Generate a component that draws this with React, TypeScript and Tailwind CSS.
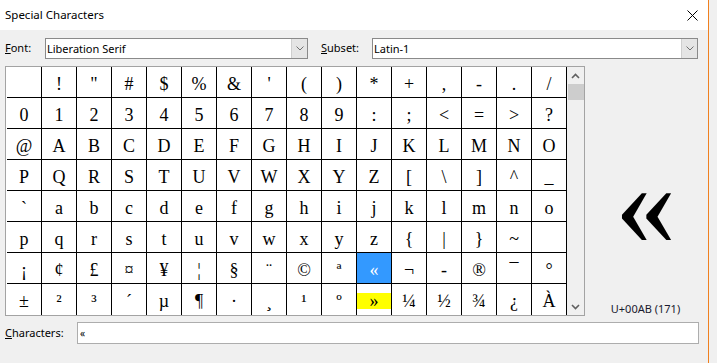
import React from "react";

const ROWS = [
  " !\"#$%&'()*+,-./",
  "0123456789:;<=>?",
  "@ABCDEFGHIJKLMNO",
  "PQRSTUVWXYZ[\\]^_",
  "`abcdefghijklmno",
  "pqrstuvwxyz{|}~ ",
  "¡¢£¤¥¦§¨©ª«¬-®¯°",
  "±²³´µ¶·¸¹º»¼½¾¿À",
];

const ui = "font-['Segoe_UI','Noto_Sans',sans-serif]";

function Chevron({ up = false }: { up?: boolean }) {
  return (
    <svg width="9" height="6" viewBox="0 0 9 6">
      <polyline
        points={up ? "1,5 4.5,1.5 8,5" : "1,1 4.5,4.5 8,1"}
        fill="none"
        stroke="currentColor"
        strokeWidth="1.6"
      />
    </svg>
  );
}

function Combo({ value, width }: { value: string; width: string }) {
  return (
    <div className={`${width} h-[21px] flex bg-white border border-[#8a8a8a]`}>
      <div className="flex-1 pl-px text-[11px] leading-[19px] text-black">{value}</div>
      <div className="w-[16px] h-[19px] bg-[#e5e5e5] border-l border-[#cfcfcf] flex items-center justify-center text-[#707070]">
        <svg width="8" height="5" viewBox="0 0 8 5">
          <polyline points="0.5,0.5 4,4 7.5,0.5" fill="none" stroke="currentColor" strokeWidth="1" />
        </svg>
      </div>
    </div>
  );
}

function Cell({ ch, row, col }: { ch: string; row: number; col: number }) {
  const sel = row === 6 && col === 10;
  const mark = row === 7 && col === 10;
  const edge = row < 7 ? "border-r border-b" : "border-r";
  if (mark) {
    return (
      <div className={`h-[31px] ${edge} border-black pt-[9px]`}>
        <div className="h-[16px] bg-[#ffff00] flex items-center justify-center text-[18px] leading-none text-black">
          {ch}
        </div>
      </div>
    );
  }
  return (
    <div
      className={`h-[31px] ${edge} border-black flex items-center justify-center pt-[3px] text-[18px] leading-none ${
        sel ? "bg-[#3399ff] text-white" : "text-black"
      }`}
    >
      {ch}
    </div>
  );
}

export default function App() {
  return (
    <div className={`w-[717px] h-[363px] flex bg-[#f0f0f0] overflow-hidden ${ui}`}>
      <div className="w-[708px] flex flex-col">
        <div className="h-[30px] bg-white flex items-center justify-between pl-[5px] pr-[10px]">
          <span className="text-[11.5px] text-black">Special Characters</span>
          <svg width="11" height="11" viewBox="0 0 11 11">
            <path d="M0.5 0.5 L10.5 10.5 M10.5 0.5 L0.5 10.5" stroke="#000" strokeWidth="1" />
          </svg>
        </div>

        <div className="pl-[5px] flex flex-col">
          <div className="mt-[8px] h-[21px] flex items-center text-[11px] text-black">
            <span className="w-[40px]">
              <span className="underline">F</span>ont:
            </span>
            <Combo value="Liberation Serif" width="w-[263px]" />
            <span className="w-[51px] ml-[13px]">
              <span className="underline">S</span>ubset:
            </span>
            <Combo value="Latin-1" width="w-[326px]" />
          </div>

          <div className="mt-[7px] flex">
            <div className="w-[580px] h-[250px] border border-[#a3a3a3] bg-white flex">
              <div className="pl-px grid grid-cols-[repeat(16,35px)] font-['Liberation_Serif',serif]">
                {ROWS.map((r, ri) =>
                  Array.from(r).map((ch, ci) => <Cell key={`${ri}-${ci}`} ch={ch} row={ri} col={ci} />)
                )}
              </div>
              <div className="w-[17px] flex flex-col bg-[#f0f0f0] text-[#606060]">
                <div className="h-[17px] flex items-center justify-center">
                  <Chevron up />
                </div>
                <div className="h-[16px] ml-px bg-[#cdcdcd]" />
                <div className="flex-1" />
                <div className="h-[17px] flex items-center justify-center">
                  <Chevron />
                </div>
              </div>
            </div>

            <div className="w-[121px] h-[250px] flex flex-col items-center">
              <div className="mt-[107px] h-[60px] flex items-center justify-center font-['Liberation_Serif',serif] text-[122px] leading-none text-black">
                «
              </div>
              <div className="mt-[68px] h-[16px] text-[11px] leading-[16px] text-[#1a1a2e]">U+00AB (171)</div>
            </div>
          </div>

          <div className="mt-[6px] h-[22px] flex items-center text-[11px] text-black">
            <span className="w-[72px]">
              <span className="underline">C</span>haracters:
            </span>
            <div className="w-[622px] h-[22px] bg-white border border-[#adadad] pl-[2px] text-[10px] leading-[20px]">
              «
            </div>
          </div>
        </div>
      </div>
      <div className="w-px bg-[#f0801f]" />
      <div className="flex-1 bg-[#f0f0f0]" />
    </div>
  );
}
